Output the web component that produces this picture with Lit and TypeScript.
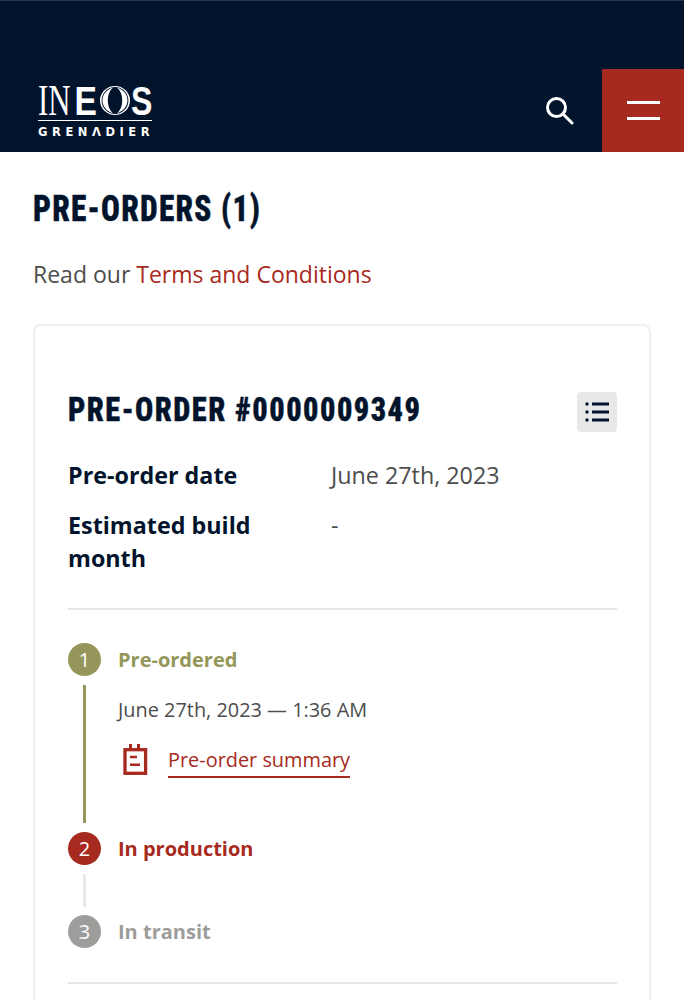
import { LitElement, html, css } from "lit";
import { customElement } from "lit/decorators.js";

@customElement("app-root")
export class AppRoot extends LitElement {
  static styles = css`
    :host { display: block; width: 684px; height: 1000px; overflow: hidden; background: #fff; font-family: "Open Sans", sans-serif; color: #4d4d4d; }
    header { height: 151px; background: #02142c; border-top: 1px solid #24364c; display: flex; align-items: flex-end; }
    .logo { margin: 0 0 14px 38px; display: block; overflow: visible; }
    .logo text { fill: #fff; }
    .logo .in { font-family: "Liberation Serif", serif; font-size: 44px; }
    .logo .eos { font-family: "Liberation Sans", sans-serif; font-weight: 700; font-size: 40px; }
    .logo .gr { font-family: "DejaVu Sans", sans-serif; font-weight: 700; font-size: 11.5px; letter-spacing: 4.55px; }
    .spacer { flex: 1; }
    .search { margin: 0 28px 26px 0; display: block; }
    .menu { width: 82px; height: 83px; background: #a72a20; display: flex; flex-direction: column; justify-content: center; align-items: center; gap: 13px; }
    .menu i { display: block; width: 33px; height: 3px; background: #fff; }
    main { padding: 0 33px; }
    h1, h2 { font-family: "Roboto Condensed", "Liberation Sans Narrow", "Liberation Sans", sans-serif; font-weight: 800; color: #02142c; white-space: nowrap; transform-origin: left center; -webkit-text-stroke: 0.5px #02142c; }
    h1 { margin: 33px 0 0; font-size: 36px; line-height: 48px; letter-spacing: 1.45px; transform: scaleX(0.87); }
    .terms { margin: 24px 0 0; font-size: 23px; line-height: 34px; }
    a { color: #a72a20; text-decoration: none; }
    .card { margin-top: 33px; border: 2px solid #eeeeee; border-radius: 8px; padding: 0 32px 40px 33px; height: 760px; box-sizing: content-box; }
    .card-head { display: flex; justify-content: space-between; align-items: center; margin-top: 65px; height: 42px; }
    h2 { margin: 0; padding-bottom: 4px; font-size: 33px; line-height: 38px; letter-spacing: 1.6px; transform: scaleX(0.92); }
    .list-btn { width: 40px; height: 40px; border-radius: 4px; background: #e8e8e8; display: flex; align-items: center; justify-content: center; }
    dl { margin: 26px 0 0; display: grid; grid-template-columns: 263px 1fr; row-gap: 17px; font-size: 23.3px; line-height: 33px; }
    dt { font-weight: 700; color: #02142c; padding-right: 50px; }
    dd { margin: 0; }
    .details { padding-bottom: 33px; border-bottom: 2px solid #e6e6e6; }
    .steps { padding-top: 33px; padding-bottom: 34px; border-bottom: 2px solid #e6e6e6; }
    .step { display: flex; align-items: center; gap: 17px; height: 33px; font-size: 20px; font-weight: 700; }
    .dot { width: 33px; height: 33px; border-radius: 50%; color: #fff; font-weight: 400; font-size: 20px; display: flex; align-items: center; justify-content: center; flex: none; }
    .olive { color: #949759; } .olive .dot { background: #949759; }
    .red { color: #a72a20; } .red .dot { background: #a72a20; }
    .grey { color: #9d9d9b; } .grey .dot { background: #9d9d9b; }
    .track { display: flex; margin-left: 15px; }
    .bar { width: 3px; background: #949759; flex: none; margin: 9px 0 9px; }
    .bar.off { background: #e8e8e8; height: 33px; margin: 9px 0 8px; }
    .content { margin-left: 32px; height: 156px; }
    .when { margin-top: 17px; font-size: 19.9px; line-height: 34px; }
    .summary { margin: 17px 0 0 5px; display: flex; align-items: flex-start; gap: 19px; }
    .summary svg { flex: none; }
    .summary a { font-size: 19.9px; line-height: 32px; border-bottom: 2px solid #a72a20; height: 32px; }
  `;
  render() {
    return html`
      <header>
        <svg class="logo" width="115" height="52" viewBox="0 0 115 52" aria-label="INEOS Grenadier">
          <text class="in" transform="translate(0 29) scale(0.7 1)">IN</text>
          <text class="eos" transform="translate(36.5 29) scale(0.84 1)">E</text>
          <g>
            <ellipse cx="77" cy="14.5" rx="15" ry="14.5" fill="#fff"/>
            <ellipse cx="77" cy="14.5" rx="13.4" ry="13.6" fill="#02142c"/>
            <path d="M75 1.6C61 6 61 23 75 27.4C68 22 68 7 75 1.6ZM79 1.6C93 6 93 23 79 27.4C86 22 86 7 79 1.6Z" fill="#fff"/>
          </g>
          <text class="eos" transform="translate(93 29) scale(0.8 1)">S</text>
          <rect x="0" y="34" width="114" height="1" fill="#fff"/>
          <text class="gr" x="0" y="49.5">GRENΛDIER</text>
        </svg>
        <div class="spacer"></div>
        <svg class="search" width="30" height="30" viewBox="0 0 30 30" fill="none" stroke="#fff" stroke-width="3" stroke-linecap="round" aria-hidden="true"><circle cx="12.5" cy="11.5" r="9"/><path d="M19.5 18.5l8.5 8.5"/></svg>
        <div class="menu"><i></i><i></i></div>
      </header>
      <main>
        <h1>PRE-ORDERS (1)</h1>
        <p class="terms">Read our <a href="#">Terms and Conditions</a></p>
        <section class="card">
          <div class="card-head">
            <h2>PRE-ORDER #0000009349</h2>
            <div class="list-btn">
              <svg width="26" height="20" viewBox="0 0 26 20" aria-hidden="true"><g fill="#02142c"><circle cx="3" cy="2" r="1.7"/><circle cx="3" cy="10" r="1.7"/><circle cx="3" cy="18" r="1.7"/><rect x="8" y="0.5" width="17" height="3"/><rect x="8" y="8.5" width="17" height="3"/><rect x="8" y="16.5" width="17" height="3"/></g></svg>
            </div>
          </div>
          <div class="details">
            <dl>
              <dt>Pre-order date</dt><dd>June 27th, 2023</dd>
              <dt>Estimated build month</dt><dd>-</dd>
            </dl>
          </div>
          <div class="steps">
            <div class="step olive"><span class="dot">1</span>Pre-ordered</div>
            <div class="track">
              <div class="bar"></div>
              <div class="content">
                <div class="when">June 27th, 2023 — 1:36 AM</div>
                <div class="summary">
                  <svg width="26" height="32" viewBox="0 0 26 32" fill="none" aria-hidden="true"><rect x="2" y="5.7" width="20.6" height="23.6" stroke="#a72a20" stroke-width="3.3"/><path d="M7.5 0v5M15.5 0v5" stroke="#a72a20" stroke-width="3"/><path d="M7 13h7M7 20.7h10" stroke="#a72a20" stroke-width="2.4"/></svg>
                  <a href="#">Pre-order summary</a>
                </div>
              </div>
            </div>
            <div class="step red"><span class="dot">2</span>In production</div>
            <div class="track"><div class="bar off"></div></div>
            <div class="step grey"><span class="dot">3</span>In transit</div>
          </div>
        </section>
      </main>
    `;
  }
}
